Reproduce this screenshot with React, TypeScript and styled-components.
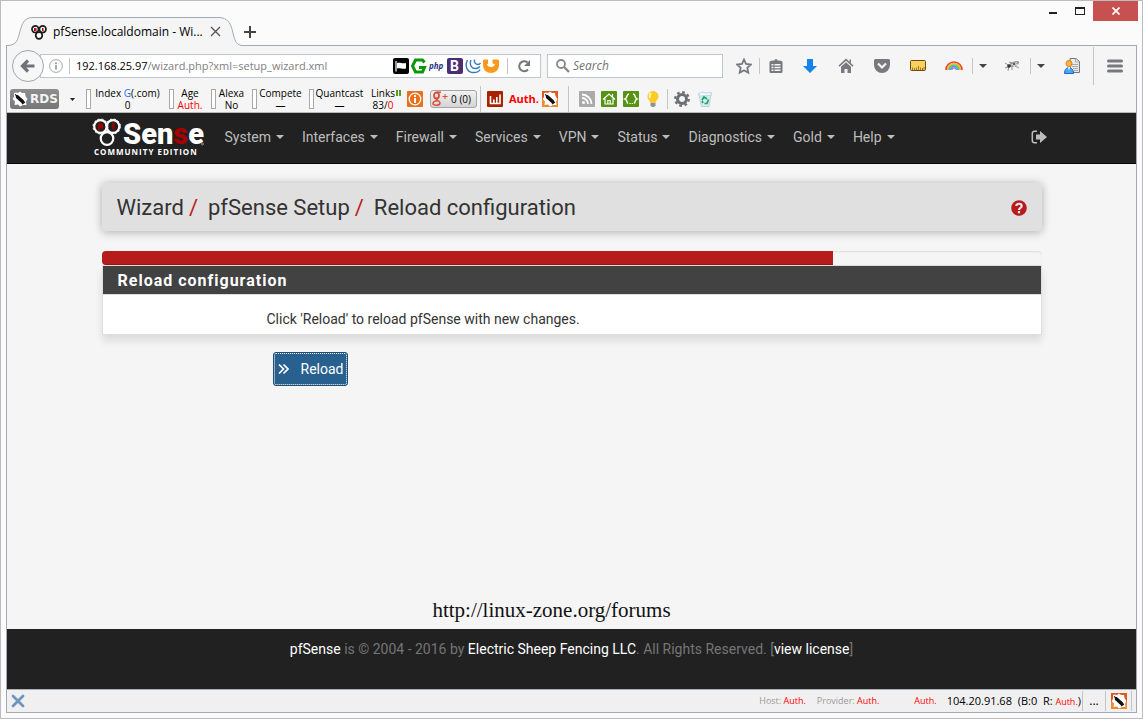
import React from "react";
import styled, { createGlobalStyle } from "styled-components";

const uiFont = '"Open Sans", "Noto Sans", sans-serif';
const pageFont = 'Roboto, "Liberation Sans", sans-serif';

const GlobalStyle = createGlobalStyle`
  *, *::before, *::after { box-sizing: border-box; }
  body { margin: 0; background: #fbfbfb; font-family: ${uiFont}; color: #000; }
  button { border: 0; padding: 0; margin: 0; background: none; font: inherit; color: inherit; cursor: pointer; }
  svg { display: block; flex: none; }
`;

/* ---------- browser window ---------- */

const Window = styled.div`
  display: flex;
  flex-direction: column;
  min-height: 100vh;
  border: 1px solid #bcbcbc;
  background: #fbfbfb;
`;

const TitleBar = styled.header`
  display: flex;
  height: 44px;
  padding: 0 4px 0 6px;
`;

const Tab = styled.div`
  position: relative;
  z-index: 1;
  display: flex;
  align-items: center;
  align-self: flex-end;
  width: 236px;
  height: 29px;
  margin-bottom: -1px;
  padding: 0 22px 0 24px;
  font-size: 12px;
  line-height: 16px;
`;

const TabShape = styled.svg`
  position: absolute;
  inset: 0;
  z-index: -1;
`;

const TabTitle = styled.span`
  flex: 1;
  margin-left: 6px;
  white-space: nowrap;
`;

const NewTab = styled.button`
  align-self: flex-end;
  width: 14px;
  height: 28px;
  padding-top: 2px;
`;

const WindowControls = styled.div`
  display: flex;
  margin-left: auto;
  height: 20px;
`;

const WindowButton = styled.button<{ $close?: boolean }>`
  display: flex;
  align-items: center;
  justify-content: center;
  width: ${(p) => (p.$close ? 45 : 27)}px;
  background: ${(p) => (p.$close ? "#c75050" : "transparent")};
`;

const Frame = styled.div`
  display: flex;
  flex: 1;
  flex-direction: column;
  margin: 0 5px 5px;
  border: 1px solid #a0abb7;
  background: #f5f5f5;
`;

const AddressRow = styled.div`
  display: flex;
  align-items: center;
  height: 40px;
  padding-left: 5px;
`;

const BackButton = styled.button`
  position: relative;
  z-index: 1;
  display: flex;
  align-items: center;
  justify-content: center;
  width: 32px;
  height: 32px;
  margin-right: -4px;
  border: 1px solid #a0a8b0;
  border-radius: 50%;
  background: #f7f7f7;
`;

const Field = styled.div<{ $width?: number }>`
  display: flex;
  align-items: center;
  flex: ${(p) => (p.$width ? `0 0 ${p.$width}px` : "1")};
  min-width: 0;
  height: 24px;
  margin-right: 6px;
  padding: 0 8px;
  border: 1px solid #bfc5cc;
  background: #fff;
  font-size: 11px;
  line-height: 16px;
`;

const Divider = styled.span<{ $height?: number; $gap?: number }>`
  flex: none;
  width: 1px;
  height: ${(p) => p.$height ?? 16}px;
  margin: 0 ${(p) => p.$gap ?? 0}px;
  background: #c4c4c4;
`;

const TextInput = styled.input<{ $search?: boolean }>`
  flex: 1;
  min-width: 0;
  padding: 0 0 0 ${(p) => (p.$search ? 1 : 0)}px;
  border: 0;
  outline: 0;
  background: none;
  color: #808080;
  font: ${(p) => (p.$search ? "italic 12px" : "normal 11px")}/16px ${uiFont};
  &::placeholder { color: #737373; opacity: 1; }
`;

const SiteIcons = styled.div`
  display: flex;
  gap: 2px;
`;

const ToolButton = styled.button<{ $width: number }>`
  display: flex;
  flex: none;
  align-items: center;
  justify-content: center;
  width: ${(p) => p.$width}px;
  height: 32px;
`;

const SeoRow = styled.div`
  display: flex;
  align-items: center;
  height: 27px;
  padding-left: 3px;
  border-bottom: 1px solid #b8b8b8;
  font-size: 10px;
  line-height: 12px;
`;

const RdsButton = styled.button`
  display: flex;
  align-items: center;
  width: 49px;
  height: 20px;
  padding-left: 2px;
  gap: 2px;
  border-radius: 3px;
  background: linear-gradient(#8e8e8e, #777);
  color: #f4f4f4;
  font: bold 12px/20px "DejaVu Sans", sans-serif;
`;

const Stat = styled.div<{ $width: number }>`
  display: flex;
  align-items: center;
  flex: none;
  width: ${(p) => p.$width}px;
  padding-right: 5px;
`;

const StatMark = styled.span`
  width: 5px;
  height: 20px;
  border: 1px solid #a8a8a8;
  background: #fff;
`;

const StatText = styled.span`
  flex: 1;
  text-align: center;
  white-space: nowrap;
`;

const Red = styled.span` color: #f00; `;
const Blue = styled.span` color: #1a73e8; `;

const PlusButton = styled.button`
  display: flex;
  align-items: center;
  width: 47px;
  height: 18px;
  margin: 0 3px 0 7px;
  padding: 0 5px 0 1px;
  justify-content: space-between;
  border: 1px solid #a5a5a5;
  border-radius: 3px;
  background: linear-gradient(#f2f2f2, #d4d4d4);
`;

const RankText = styled.span`
  margin-right: 3px;
  color: #f00;
  font-size: 11px;
  font-weight: bold;
`;

const SeoIcons = styled.div<{ $gap: number }>`
  display: flex;
  gap: ${(p) => p.$gap}px;
`;

const StatusBar = styled.footer`
  display: flex;
  align-items: center;
  height: 23px;
  padding-right: 4px;
  border-top: 1px solid #aab0ba;
  background: #f0f0f0;
  font-size: 9px;
  line-height: 14px;
  white-space: nowrap;
`;

const CloseBar = styled.button`
  margin: 0 auto 0 4px;
`;

const StatusLabel = styled.span<{ $gap: number }>`
  margin-right: ${(p) => p.$gap}px;
  color: #9a9a9a;
`;

const StatusAddress = styled.span`
  font-size: 11px;
  white-space: pre;
  ${Red} { font-size: 9px; }
`;

const More = styled.span`
  font-size: 12px;
`;

/* ---------- web page ---------- */

const Page = styled.div`
  display: flex;
  flex: 1;
  flex-direction: column;
  background: #f5f5f5;
  color: #333;
  font-family: ${pageFont};
  font-size: 14px;
  line-height: 20px;
`;

const NavBar = styled.nav`
  height: 51px;
  border-bottom: 1px solid #080808;
  background: #212121;
`;

const NavInner = styled.div`
  display: flex;
  align-items: center;
  max-width: 970px;
  height: 48px;
  margin: 0 auto;
  padding: 0 10px 0 5px;
`;

const Brand = styled.a`
  display: block;
  margin-right: 12px;
`;

const NavLink = styled.a`
  display: flex;
  align-items: center;
  gap: 5px;
  padding: 0 9px;
  color: #bdbdbd;
  text-decoration: none;
  &::after {
    content: "";
    border: 4px solid transparent;
    border-top-color: currentColor;
    border-bottom: 0;
  }
`;

const Logout = styled.a`
  margin-left: auto;
  color: #bdbdbd;
`;

const Content = styled.main`
  display: flex;
  flex: 1;
  flex-direction: column;
  width: 100%;
  max-width: 970px;
  margin: 0 auto;
  padding: 19px 15px 6px;
`;

const PageHeader = styled.div`
  display: flex;
  align-items: center;
  justify-content: space-between;
  height: 48px;
  margin-bottom: 20px;
  padding: 2px 15px 0;
  border-radius: 4px;
  background: #e0e0e0;
  box-shadow: 0 1px 10px rgba(0, 0, 0, 0.3);
`;

const Crumbs = styled.ol`
  display: flex;
  margin: 0;
  padding: 0;
  list-style: none;
  font-size: 22px;
  line-height: 32px;
`;

const Crumb = styled.li`
  &:not(:last-child)::after {
    content: "/";
    margin: 0 10px 0 5px;
    color: #b71c1c;
  }
`;

const Progress = styled.div`
  height: 14px;
  border-radius: 4px;
  background: #f5f5f5;
  box-shadow: inset 0 1px 2px rgba(0, 0, 0, 0.1);
  overflow: hidden;
`;

const ProgressFill = styled.div`
  height: 100%;
  background: #b71c1c;
  box-shadow: inset 0 -1px 0 rgba(0, 0, 0, 0.15);
`;

const Panel = styled.section`
  border: 1px solid #ddd;
  background: #fff;
  box-shadow: 0 6px 8px rgba(0, 0, 0, 0.1);
`;

const PanelTitle = styled.h2`
  margin: 0;
  padding: 5px 15px 3px;
  border-bottom: 1px solid #ddd;
  background: #424242;
  color: #fff;
  font-size: 16px;
  font-weight: 700;
  line-height: 20px;
  letter-spacing: 1px;
`;

const PanelText = styled.p`
  margin: 0;
  padding: 14px 15px 5px 164px;
`;

const ReloadButton = styled.button`
  display: flex;
  align-items: center;
  align-self: flex-start;
  gap: 12px;
  height: 34px;
  margin: 17px 0 0 171px;
  padding: 0 4px;
  border: 1px solid #204d74;
  border-radius: 3px;
  outline: 1px dotted #fff;
  outline-offset: -2px;
  background: #286090;
  color: #fff;
`;

const Watermark = styled.p`
  margin: auto 40px 0 0;
  color: #111;
  font: 21px/26px "Liberation Serif", serif;
  text-align: center;
`;

const PageFooter = styled.footer`
  height: 60px;
  padding-top: 10px;
  background: #212121;
  color: #757575;
  text-align: center;
`;

const FooterLink = styled.a`
  color: #fff;
  text-decoration: none;
`;

/* ---------- drawings ---------- */

const Icon = ({ size = 16, children }: { size?: number; children: React.ReactNode }) => (
  <svg width={size} height={size} viewBox="0 0 16 16" aria-hidden="true">{children}</svg>
);

const Favicon = () => (
  <Icon>
    <g fill="#fff" stroke="#1a1a1a" strokeWidth="1.7">
      <circle cx="4.3" cy="5.2" r="3.3" /><circle cx="11.7" cy="5.2" r="3.3" /><circle cx="8" cy="11.5" r="3.3" />
    </g>
    <path d="M3 4h2.5v3H3zM11 4h1.6v3H11z" fill="#a11" />
  </Icon>
);

const Quake = ({ background = true }: { background?: boolean }) => (
  <Icon>
    {background && <path fill="#e0581a" d="M0 0h16v16H0z" />}
    {background && <path fill="#f3a03a" d="M0 9h16v7H0z" opacity=".7" />}
    <path fill="#fff" d="M4 1.500l2 .5 2-1.500 2 1.500 3 0 .5 3L15.500 8 14 10.500l.5 3.500-3.500 0-3 1.500-2-2-3.500.5.5-3.500L.5 8 2 6l0-4z" />
    <path stroke="#111" strokeWidth="3.600" strokeLinecap="round" d="M5.500 6l5 4.500" />
    <path stroke="#111" strokeWidth="1.200" d="M3 3.500l3 2M10 13l3-2" />
  </Icon>
);

const Caret = () => (
  <svg width="8" height="4" viewBox="0 0 8 4" aria-hidden="true"><path d="M0 0h8L4 4z" fill="#444" /></svg>
);

const SmallCaret = () => (
  <svg width="5" height="3" viewBox="0 0 5 3" aria-hidden="true"><path d="M0 0h5L2.500 3z" fill="#222" /></svg>
);

const Logo = () => (
  <svg width="112" height="40" viewBox="0 0 112 40" role="img" aria-label="pfSense Community Edition">
    <g fill="none" stroke="#fff" strokeWidth="2.200">
      <circle cx="8.500" cy="9.500" r="6.300" /><circle cx="21" cy="9.500" r="6.300" /><circle cx="15" cy="21.500" r="6.300" />
    </g>
    <g fill="none" stroke="#fff" strokeWidth="1" strokeDasharray="2 2">
      <circle cx="8.500" cy="9.500" r="7.500" /><circle cx="21" cy="9.500" r="7.500" />
    </g>
    <path d="M6 6.500h5v5H8v2H6zM20 5.500h2.500v7H20z" fill="#900" />
    <text x="31" y="27" fontFamily="Roboto, sans-serif" fontSize="29" fontWeight="900" fill="#fff">
      Sen<tspan fill="#a80000">s</tspan>e
    </text>
    <circle cx="110.500" cy="27" r="1" fill="none" stroke="#aaa" strokeWidth=".8" />
    <text x="2" y="38" fontFamily='"Open Sans", sans-serif' fontSize="8" fontWeight="bold" fill="#fff" letterSpacing="1">COMMUNITY EDITION</text>
  </svg>
);

const menus = ["System", "Interfaces", "Firewall", "Services", "VPN", "Status", "Diagnostics", "Gold", "Help"];
const progress = 7 / 9;

export default function App() {
  return (
    <Window>
      <GlobalStyle />
      <TitleBar>
        <Tab>
          <TabShape width="236" height="29" viewBox="0 0 236 29" aria-hidden="true">
            <path d="M0 28.500C8 28.500 10 25 12 18C15 6 17 .5 26 .5H212C221 .5 224 7 226 16C228 25 230 28.500 236 28.500V29H0z" fill="#f5f5f5" />
            <path d="M0 28.500C8 28.500 10 25 12 18C15 6 17 .5 26 .5H212C221 .5 224 7 226 16C228 25 230 28.500 236 28.500" fill="none" stroke="#a0abb7" />
          </TabShape>
          <Favicon />
          <TabTitle>pfSense.localdomain - Wi...</TabTitle>
          <button aria-label="Close tab">
            <svg width="11" height="11" viewBox="0 0 11 11"><path d="M1 1l9 9M10 1l-9 9" stroke="#555" strokeWidth="1.300" /></svg>
          </button>
        </Tab>
        <NewTab aria-label="New tab">
          <svg width="14" height="14" viewBox="0 0 14 14"><path d="M7 1v12M1 7h12" stroke="#444" strokeWidth="2" /></svg>
        </NewTab>
        <WindowControls>
          <WindowButton aria-label="Minimize"><svg width="8" height="8" viewBox="0 0 8 8"><path d="M0 5h8v2H0z" fill="#222" /></svg></WindowButton>
          <WindowButton aria-label="Maximize"><svg width="10" height="8" viewBox="0 0 10 8"><path d="M0 0h10v8H0zM1 2v5h8V2z" fill="#222" fillRule="evenodd" /></svg></WindowButton>
          <WindowButton $close aria-label="Close"><svg width="8" height="8" viewBox="0 0 8 8"><path d="M.5.5l7 7M7.500.5l-7 7" stroke="#fff" strokeWidth="1.700" /></svg></WindowButton>
        </WindowControls>
      </TitleBar>

      <Frame>
        <AddressRow>
          <BackButton aria-label="Back">
            <Icon><path d="M8 2.500L2.500 8 8 13.500M3 8h11.500" fill="none" stroke="#6e7378" strokeWidth="3.200" /></Icon>
          </BackButton>
          <Field>
            <Icon size={14}>
              <circle cx="8" cy="8" r="7.300" fill="none" stroke="#999" /><path d="M7 7h2v5H7zM7 4h2v2H7z" fill="#999" />
            </Icon>
            <Divider $gap={6} />
            <span>192.168.25.97</span>
            <TextInput aria-label="Address" defaultValue="/wizard.php?xml=setup_wizard.xml" />
            <SiteIcons>
              <Icon><rect width="16" height="16" rx="2" /><path d="M3 3v10.500" stroke="#fff" strokeWidth="1.200" /><path d="M4 5c3-1 5 1 9 0v5.500c-4 1-6-1-9 0z" fill="#fff" /></Icon>
              <Icon><path d="M13.500 4.500L11.500 2h-7L1.500 8l3 6h7l2-4.500H8" fill="none" stroke="#0a980a" strokeWidth="3" /></Icon>
              <svg width="16" height="16" viewBox="0 0 16 16"><text x="0" y="11" fontFamily="Open Sans, sans-serif" fontSize="8" fontWeight="bold" fontStyle="italic" fill="#26347f">php</text></svg>
              <Icon><rect width="16" height="16" rx="2" fill="#4b2e72" /><text x="3" y="13" fontFamily="Roboto, sans-serif" fontSize="14" fontWeight="bold" fill="#fff">B</text></Icon>
              <Icon><path d="M2.500 2C-1 9 3 15 9 14.500c3 0 5-1 6-3M6 2c-2 5 1 9 5 8.500 2 0 3-1 4-2M9.500 1.500c-.5 3 1 5 3.500 5 1 0 2-.5 2.500-1.500" fill="none" stroke="#3b78b8" strokeWidth="1.400" /></Icon>
              <Icon><path d="M0 2.500L1 1.500h4v4.500H4c.5 4 7.500 4 8 0L9.500 5.500V1.500H15l1 1V7c0 10.500-16 10.500-16 0z" fill="#f79a1c" /></Icon>
            </SiteIcons>
            <Divider $gap={8} />
            <button aria-label="Refresh page">
              <Icon><path d="M12 11.500A5 5 0 1 1 11.500 4.500" fill="none" stroke="#777" strokeWidth="2" /><path d="M14 2v6H8z" fill="#777" /></Icon>
            </button>
          </Field>
          <Field $width={176}>
            <Icon><circle cx="5" cy="6" r="4" fill="none" stroke="#888" strokeWidth="1.800" /><path d="M8 9l5 5" stroke="#888" strokeWidth="2.400" /></Icon>
            <TextInput $search type="search" aria-label="Search" placeholder="Search" />
          </Field>

          <ToolButton $width={30} aria-label="Bookmark this page">
            <Icon><path d="M8 1.500l2 4.500 5 .5-3.700 3.300 1 4.900L8 12.200l-4.300 2.500 1-4.900L1 6.500 6 6z" fill="none" stroke="#76797d" strokeWidth="1.800" /></Icon>
          </ToolButton>
          <Divider />
          <ToolButton $width={32} aria-label="Show bookmarks">
            <Icon>
              <path d="M5 2.500h1.500a1.500 1.500 0 0 1 3 0H11V4H5zM3 2.800h10a1.500 1.500 0 0 1 1.500 1.500V13.500A1.500 1.500 0 0 1 13 15H3a1.500 1.500 0 0 1-1.500-1.500V4.300A1.500 1.500 0 0 1 3 2.800z" fill="#76797d" />
              <path d="M3.500 6h2v1.500h-2zM6.500 6h6v1.500h-6zM3.500 8.800h2v1.500h-2zM6.500 8.800h6v1.500h-6zM3.500 11.600h2V13h-2zM6.500 11.600h6V13h-6z" fill="#f5f5f5" />
            </Icon>
          </ToolButton>
          <ToolButton $width={36} aria-label="Downloads"><Icon><path d="M5 1h6v7h4l-7 7-7-7h4z" fill="#1683e8" /></Icon></ToolButton>
          <ToolButton $width={36} aria-label="Home"><Icon><path d="M8 .5l7.500 7-1 1.200L8 2.800 1.500 8.700.5 7.500z M8 4.300l5 4.500V15H9.500v-4h-3v4H3V8.800z M11.500 1.500H13V5l-1.500-1.400z" fill="#76797d" /></Icon></ToolButton>
          <ToolButton $width={36} aria-label="Save to Pocket"><Icon><path d="M1.500 1h13A1.500 1.500 0 0 1 16 2.500V7a8 8 0 0 1-16 0V2.500A1.500 1.500 0 0 1 1.500 1z" fill="#76797d" /><path d="M4 5.500l4 4 4-4" fill="none" stroke="#f5f5f5" strokeWidth="2.200" /></Icon></ToolButton>
          <ToolButton $width={36} aria-label="Ruler"><Icon><rect x=".5" y="2.500" width="15" height="10" rx="1" fill="#fcd05c" stroke="#6b4b10" /><path d="M2.500 12V9.500M4.500 12v-2M6.500 12V9.500M8.500 12V8M10.500 12V9.500M12.500 12v-2M14 12V9" stroke="#a27a25" /></Icon></ToolButton>
          <ToolButton $width={36} aria-label="Color tools">
            <svg width="18" height="16" viewBox="0 0 18 16" fill="none" strokeWidth="1.600">
              <path d="M1 12a8 8 0 0 1 16 0" stroke="#ed3b32" /><path d="M2.500 12a6.500 6.500 0 0 1 13 0" stroke="#ffb52e" /><path d="M4 12a5 5 0 0 1 10 0" stroke="#50cf4d" /><path d="M5.500 12a3.500 3.500 0 0 1 7 0" stroke="#3fa3ef" /><path d="M6.800 12a2.200 2.200 0 0 1 4.400 0" stroke="#b264df" strokeWidth="1.200" />
            </svg>
          </ToolButton>
          <Divider />
          <ToolButton $width={20} aria-label="Color tools menu"><Caret /></ToolButton>
          <ToolButton $width={37} aria-label="Firebug">
            <Icon><ellipse cx="10" cy="6" rx="5.500" ry="2.400" transform="rotate(-20 10 6)" fill="#999" /><path d="M1 5l5 3-5 2M5 8l-1 5M8 9v3M11 8l4 2M5 4l3 1" fill="none" stroke="#777" strokeWidth=".8" /><path d="M7 7l6-2.500M9 8l5-2" stroke="#ddd" /><circle cx="5" cy="8" r="1.800" fill="#333" /><circle cx="10" cy="6" r="1" fill="#444" /></Icon>
          </ToolButton>
          <Divider />
          <ToolButton $width={20} aria-label="Firebug menu"><Caret /></ToolButton>
          <ToolButton $width={42} aria-label="User agent">
            <Icon><path d="M6 .5h6l3.500 3v11H6z" fill="#e9e9e9" stroke="#777" /><path d="M11.500.5v3.500h4M8 6.500h6M8 8.500h6M9 10.500h5M10 12.500h4" fill="none" stroke="#999" strokeWidth=".8" /><path d="M.5 15.500c0-8 9-8 9 0z" fill="#4da3f5" stroke="#1769c4" /><path d="M4 9h2l-1 4z" fill="#fff" /><circle cx="5" cy="5.500" r="3" fill="#ffb13d" stroke="#d98216" /></Icon>
          </ToolButton>
          <Divider $height={38} />
          <ToolButton $width={42} aria-label="Open menu"><Icon><path d="M1.500 3h13M1.500 8h13M1.500 13h13" stroke="#76797d" strokeWidth="3" strokeLinecap="round" /></Icon></ToolButton>
        </AddressRow>

        <SeoRow>
          <RdsButton><Quake background={false} />RDS</RdsButton>
          <ToolButton $width={27} aria-label="RDS menu"><SmallCaret /></ToolButton>
          <Stat $width={83}><StatMark /><StatText>Index <Blue>G</Blue>(.com)<br />0</StatText></Stat>
          <Stat $width={42}><StatMark /><StatText>Age<br /><Red>Auth.</Red></StatText></Stat>
          <Stat $width={41}><StatMark /><StatText>Alexa<br />No</StatText></Stat>
          <Stat $width={57}><StatMark /><StatText>Compete<br />—</StatText></Stat>
          <Stat $width={61}><StatMark /><StatText>Quantcast<br />—</StatText></Stat>
          <Stat $width={37}>
            <StatText>Links<br />83/<Red>0</Red></StatText>
            <svg width="6" height="18" viewBox="0 0 6 18"><path d="M0 0h2v6H0zM3 0h2v6H3z" fill="#5e9b1c" /></svg>
          </Stat>
          <button aria-label="Page info">
            <Icon><rect width="16" height="16" rx="1" fill="#ea701c" /><circle cx="8" cy="8" r="5.800" fill="none" stroke="#fff" strokeWidth="1.300" /><path d="M7 7h2v5H7zM7 4h2v2H7z" fill="#fff" /></Icon>
          </button>
          <PlusButton>
            <svg width="16" height="16" viewBox="0 0 16 16" fill="none" stroke="#dd4b39" aria-hidden="true">
              <ellipse cx="4.500" cy="4.500" rx="2.500" ry="3" strokeWidth="1.800" /><path d="M5 1.300h4M4.500 7.500c-1 1.500 3.500 2 3.500 4.500 0 3-7 3-7 .5C1 10 5 10 6 9.700" strokeWidth="1.500" /><path d="M13 3v5M10.500 5.500h5" />
            </svg>
            0 (0)
          </PlusButton>
          <Divider $height={26} />
          <ToolButton $width={28} aria-label="Statistics"><Icon><rect width="16" height="16" rx="1" fill="#a82300" /><path d="M3.500 5v7.500H13V3.500M6.800 12V8.500M9.800 12V6" fill="none" stroke="#fff" strokeWidth="1.600" /></Icon></ToolButton>
          <RankText>Auth.</RankText>
          <Quake />
          <Divider $height={26} $gap={10} />
          <SeoIcons $gap={6}>
            <button aria-label="RSS"><Icon><rect width="16" height="16" rx="1" fill="#aaa" /><circle cx="4.500" cy="11.500" r="1.500" fill="#fff" /><path d="M3 7a6 6 0 0 1 6 6M3 3.500A9.500 9.500 0 0 1 12.500 13" fill="none" stroke="#fff" strokeWidth="1.800" /></Icon></button>
            <button aria-label="Domain"><Icon><rect width="16" height="16" rx="1" fill="#579313" /><path d="M2 8.500L8 3l6 5.500M4 7.500V13h8V7.500M6.800 13V9.500h2.400V13M11.500 3v3" fill="none" stroke="#fff" strokeWidth="1.200" /></Icon></button>
            <button aria-label="Source"><Icon><rect width="16" height="16" rx="1" fill="#579313" /><path d="M6 3C3 3 5 7 2 8c2.500 1 1.500 3.500 3 4.500M10 3c3 0 1 4 4 5-2.500 1-1.500 3.500-3 4.500" fill="none" stroke="#fff" strokeWidth="1.500" /><path d="M6.500 12.500h1.200M8.700 12.500h1.200" stroke="#fff" strokeWidth="1.200" /></Icon></button>
            <button aria-label="Tips"><Icon><path d="M8 0a5.500 5.500 0 0 1 5.500 5.500c0 3-2.500 3.500-3 6.500h-5c-.5-3-3-3.500-3-6.500A5.500 5.500 0 0 1 8 0z" fill="#ffc928" /><path d="M5.500 12h5v2.500L9 16H7l-1.500-1.500z" fill="#89919a" /><path d="M6 2C4.500 3 4.500 5 5 7" fill="none" stroke="#fff2b5" strokeWidth="2" /></Icon></button>
          </SeoIcons>
          <Divider $height={20} $gap={6} />
          <SeoIcons $gap={7}>
            <button aria-label="Settings"><Icon><circle cx="8" cy="8" r="4.500" fill="none" stroke="#6c7074" strokeWidth="3" /><circle cx="8" cy="8" r="6.800" fill="none" stroke="#6c7074" strokeWidth="2.200" strokeDasharray="2.670 2.670" /></Icon></button>
            <button aria-label="Clear"><Icon><path d="M2 4l12-1-2 12.500H4.500z" fill="#d4ebf8" stroke="#b9d3e2" /><path d="M1 3l4-2 4 1 5.500-.5L14 4.500 3.500 5z" fill="#f3fafd" stroke="#b4cbd8" strokeWidth=".8" /><path d="M5 9l2-3 3 2M11.500 8.500l-1.500 4H7.500M5 10l1 2" fill="none" stroke="#21a559" strokeWidth="1.700" /></Icon></button>
          </SeoIcons>
        </SeoRow>

        <Page>
          <NavBar>
            <NavInner>
              <Brand href="#"><Logo /></Brand>
              {menus.map((name) => <NavLink href="#" key={name}>{name}</NavLink>)}
              <Logout href="#" aria-label="Log out">
                <Icon><path d="M6 2.300H3.500A2 2 0 0 0 1.300 4.500v7a2 2 0 0 0 2.200 2.200H6" fill="none" stroke="currentColor" strokeWidth="1.500" /><path d="M9 2l7 6-7 6v-3.500H5v-5h4z" fill="currentColor" /></Icon>
              </Logout>
            </NavInner>
          </NavBar>
          <Content>
            <PageHeader>
              <Crumbs><Crumb>Wizard</Crumb><Crumb>pfSense Setup</Crumb><Crumb>Reload configuration</Crumb></Crumbs>
              <a href="#" aria-label="Help for this page">
                <Icon><circle cx="8" cy="8" r="7.800" fill="#b71c1c" /><path d="M5.300 6C5.300 3 10.700 3 10.700 6 10.700 8 8 7.800 8 10M8 11v2.200" fill="none" stroke="#e8e8e8" strokeWidth="2.200" /></Icon>
              </a>
            </PageHeader>
            <Progress role="progressbar" aria-valuenow={Math.round(progress * 100)}>
              <ProgressFill style={{ width: `${progress * 100}%` }} />
            </Progress>
            <Panel>
              <PanelTitle>Reload configuration</PanelTitle>
              <PanelText>Click 'Reload' to reload pfSense with new changes.</PanelText>
            </Panel>
            <ReloadButton>
              <svg width="11" height="12" viewBox="0 0 11 12" aria-hidden="true"><path d="M1 1.500L5.500 6 1 10.500M5.500 1.500L10 6l-4.500 4.500" fill="none" stroke="#fff" strokeWidth="1.700" /></svg>
              Reload
            </ReloadButton>
            <Watermark>http://linux-zone.org/forums</Watermark>
          </Content>
          <PageFooter>
            <FooterLink href="#">pfSense</FooterLink> is © 2004 - 2016 by <FooterLink href="#">Electric Sheep Fencing LLC</FooterLink>. All Rights Reserved. [<FooterLink href="#">view license</FooterLink>]
          </PageFooter>
        </Page>

        <StatusBar>
          <CloseBar aria-label="Close add-on bar"><svg width="14" height="14" viewBox="0 0 14 14"><path d="M2 2l10 10M12 2L2 12" stroke="#6f95bd" strokeWidth="2.800" strokeLinecap="round" /></svg></CloseBar>
          <StatusLabel $gap={11}>Host: <Red>Auth.</Red></StatusLabel>
          <StatusLabel $gap={35}>Provider: <Red>Auth.</Red></StatusLabel>
          <StatusLabel $gap={10}><Red>Auth.</Red></StatusLabel>
          <StatusAddress>104.20.91.68  (B:0  R: <Red>Auth.</Red>)</StatusAddress>
          <Divider $height={20} $gap={1} />
          <ToolButton $width={20} aria-label="More"><More>...</More></ToolButton>
          <Divider $height={20} $gap={1} />
          <ToolButton $width={24} aria-label="SEO tools"><Quake /></ToolButton>
          <Divider $height={20} />
        </StatusBar>
      </Frame>
    </Window>
  );
}
